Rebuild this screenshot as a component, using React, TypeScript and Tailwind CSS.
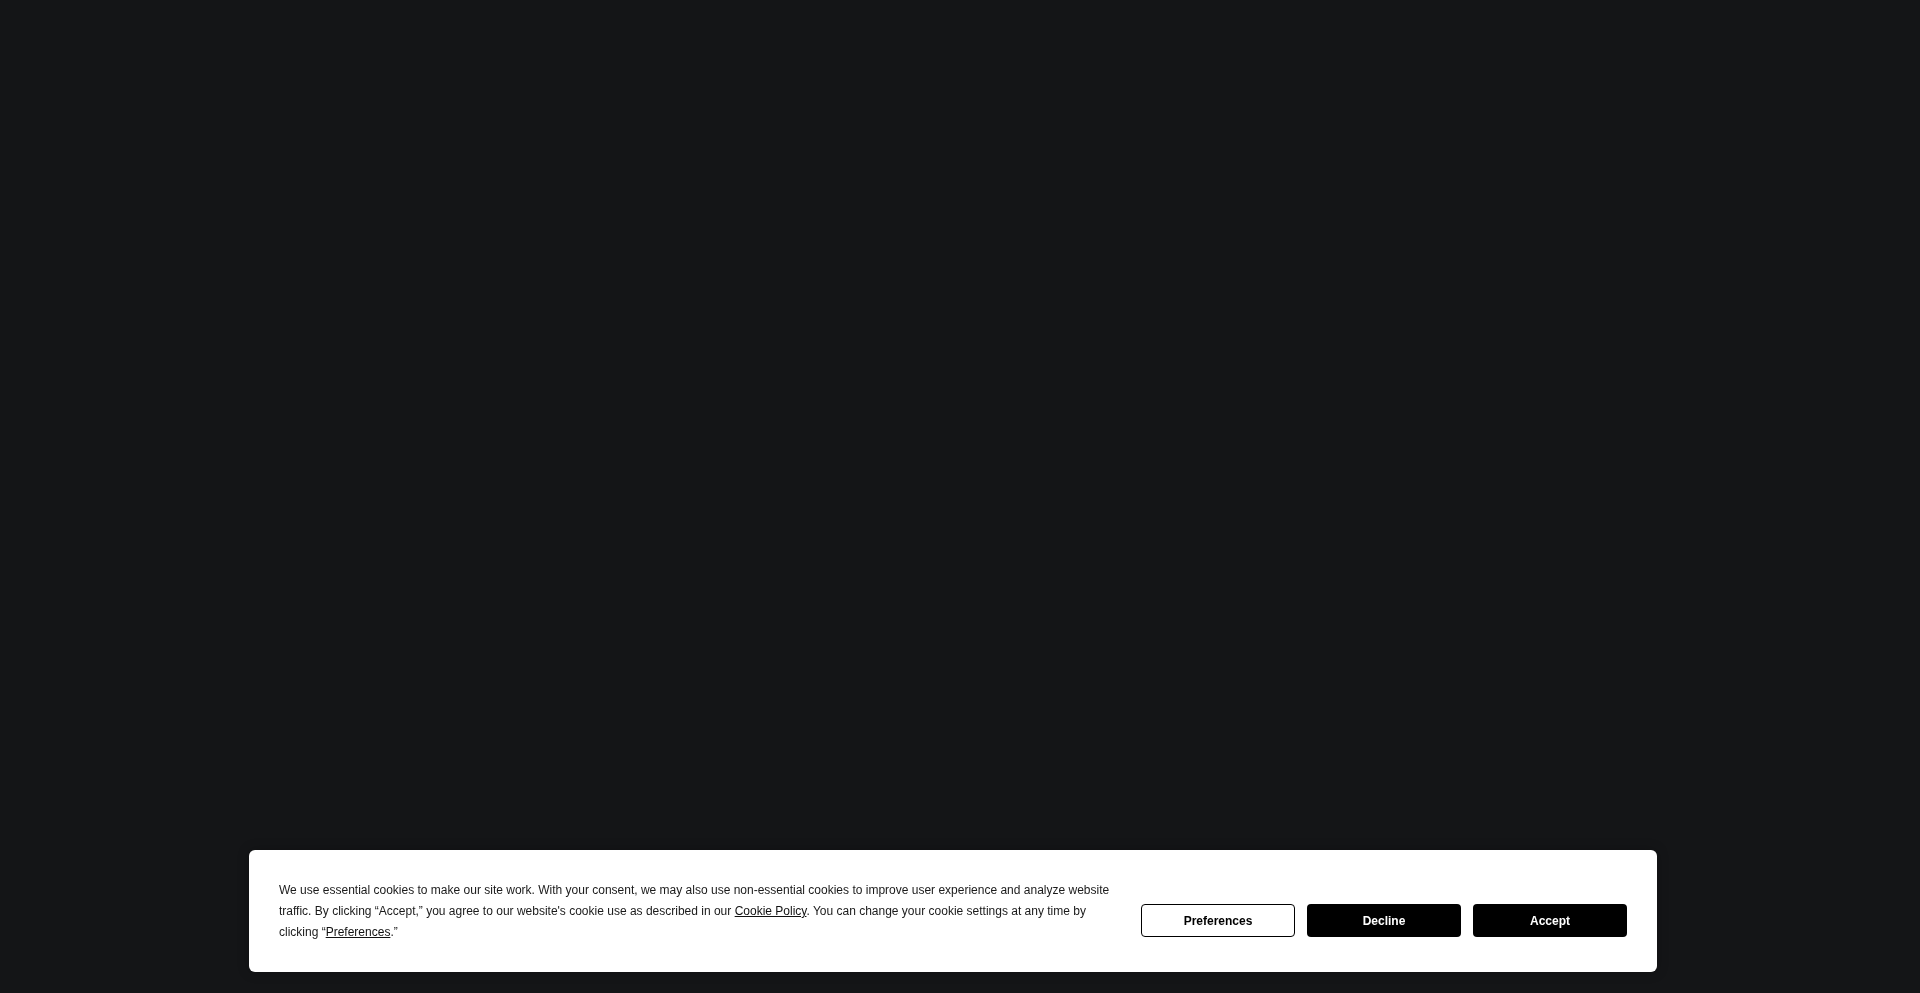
import React from "react";

export default function App() {
  return (
    <div className="min-h-[993px] w-full bg-[#141517] relative" style={{ fontFamily: '"Liberation Sans", Arial, sans-serif' }}>
      <div className="fixed left-[249px] top-[850px] w-[1408px] h-[122px] bg-white rounded-[6px] pl-[30px] pr-[29px] py-[30px] flex items-start gap-[24px] shadow-[0_0_12px_rgba(0,0,0,0.25)]">
        <p className="flex-1 text-[12px] leading-[21px] text-[#1a1a1a]">
          We use essential cookies to make our site work. With your consent, we may also use non-essential cookies to improve user experience and analyze website traffic. By clicking “Accept,” you agree to our website's cookie use as described in our{" "}
          <a className="underline text-[#111111]">Cookie Policy</a>. You can change your cookie settings at any time by clicking “<a className="underline text-[#111111]">Preferences</a>.”
        </p>
        <div className="flex gap-[12px] pt-[24px] shrink-0 mr-[1px]">
          <button className="w-[154px] h-[33px] rounded-[4px] border border-black bg-white text-black text-[12px] font-bold">
            Preferences
          </button>
          <button className="w-[154px] h-[33px] rounded-[4px] bg-black text-white text-[12px] font-bold">
            Decline
          </button>
          <button className="w-[154px] h-[33px] rounded-[4px] bg-black text-white text-[12px] font-bold">
            Accept
          </button>
        </div>
      </div>
    </div>
  );
}
